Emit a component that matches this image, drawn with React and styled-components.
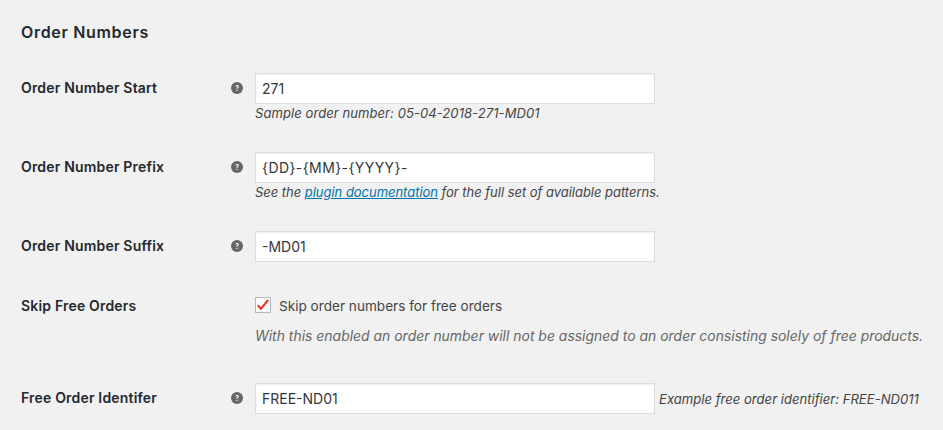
import React from 'react';
import styled, { createGlobalStyle } from 'styled-components';

const Global = createGlobalStyle`
  html, body { margin: 0; padding: 0; background: #f1f1f1; }
  body { font-family: Inter, "Open Sans", sans-serif; color: #23282d; overflow: hidden; }
`;

const Page = styled.div`
  width: 943px;
  height: 430px;
  box-sizing: border-box;
  padding: 23px 0 0 21px;
  display: flex;
  flex-direction: column;
  overflow: hidden;
`;

const Title = styled.h2`
  margin: 0 0 32px;
  font-size: 16px;
  line-height: 18px;
  font-weight: 600;
  letter-spacing: 0.68px;
  color: #23282d;
`;

const Row = styled.div`
  display: grid;
  grid-template-columns: 210px 24px 1fr;
  height: ${p => p.$height}px;
`;

const Label = styled.div`
  font-size: 14px;
  font-weight: 600;
  line-height: 18px;
  letter-spacing: 0.18px;
  padding-top: ${p => p.$flush ? 0 : 6}px;
`;

const HelpCell = styled.div`
  padding-top: 8.5px;
`;

const HelpIcon = styled.svg`
  display: block;
  width: 12px;
  height: 12px;
`;

const Field = styled.div`
  display: flex;
  flex-direction: column;
  align-items: flex-start;
`;

const InlineField = styled.div`
  display: flex;
  align-items: center;
  height: 31px;
  white-space: nowrap;
`;

const Input = styled.input`
  width: 400px;
  height: 31px;
  box-sizing: border-box;
  padding: 0 6px;
  border: 1px solid #ddd;
  background: #fff;
  border-radius: 0;
  outline: none;
  font-family: inherit;
  font-size: 14px;
  letter-spacing: ${p => p.$spaced ? 0.42 : 0}px;
  color: #32373c;
  box-shadow: inset 0 1px 2px rgba(0, 0, 0, 0.07);
`;

const Desc = styled.p`
  margin: 0;
  font-size: 13px;
  line-height: 18px;
  font-style: italic;
  letter-spacing: ${p => p.$tracking || 0}px;
  white-space: nowrap;
  color: #444;
`;

const NoteDesc = styled(Desc)`
  margin-top: 14px;
  font-size: 13.95px;
  color: #666;
`;

const SideDesc = styled(Desc)`
  margin-left: 4px;
  font-size: 13.1px;
`;

const DocLink = styled.a`
  color: #0073aa;
  text-decoration: underline;
`;

const CheckRow = styled.label`
  display: flex;
  align-items: flex-start;
  gap: 8px;
  height: 16px;
  font-size: 13.6px;
  line-height: 18px;
  color: #444;
`;

const CheckBox = styled.span`
  width: 16px;
  height: 16px;
  box-sizing: border-box;
  border: 1px solid #b4b9be;
  background: #fff;
  display: flex;
  align-items: center;
  justify-content: center;
`;

const Help = () => (
  <HelpIcon viewBox="0 0 20 20">
    <circle cx="10" cy="10" r="10" fill="#666" />
    <path d="M6.9 7.6c.2-1.9 1.5-2.8 3.3-2.8 1.8 0 3.1 1 3.1 2.6 0 1.2-.7 1.8-1.5 2.4-.7.5-.9.8-.9 1.6H9c0-1.4.4-2 1.3-2.6.6-.4 1-.8 1-1.3 0-.6-.5-1-1.2-1-.8 0-1.2.5-1.3 1.1H6.9zM9 12.8h2v2.3H9z" fill="#f1f1f1" />
  </HelpIcon>
);

const Check = () => (
  <svg width="14" height="14" viewBox="0 0 14 14">
    <path d="M1.8 7.2l3.2 3.6L12.2 2" fill="none" stroke="#ee3a33" strokeWidth="2.3" />
  </svg>
);

const App = () => (
  <Page>
    <Global />
    <Title>Order Numbers</Title>
    <Row $height={79}>
      <Label>Order Number Start</Label>
      <HelpCell><Help /></HelpCell>
      <Field>
        <Input readOnly value="271" />
        <Desc $tracking={0.08}>Sample order number: 05-04-2018-271-MD01</Desc>
      </Field>
    </Row>
    <Row $height={79}>
      <Label>Order Number Prefix</Label>
      <HelpCell><Help /></HelpCell>
      <Field>
        <Input readOnly $spaced value="{DD}-{MM}-{YYYY}-" />
        <Desc $tracking={-0.03}>See the <DocLink href="#">plugin documentation</DocLink> for the full set of available patterns.</Desc>
      </Field>
    </Row>
    <Row $height={66}>
      <Label>Order Number Suffix</Label>
      <HelpCell><Help /></HelpCell>
      <Field>
        <Input readOnly value="-MD01" />
      </Field>
    </Row>
    <Row $height={86}>
      <Label $flush>Skip Free Orders</Label>
      <HelpCell />
      <Field>
        <CheckRow>
          <CheckBox><Check /></CheckBox>
          Skip order numbers for free orders
        </CheckRow>
        <NoteDesc>With this enabled an order number will not be assigned to an order consisting solely of free products.</NoteDesc>
      </Field>
    </Row>
    <Row $height={40}>
      <Label>Free Order Identifer</Label>
      <HelpCell><Help /></HelpCell>
      <InlineField>
        <Input readOnly value="FREE-ND01" />
        <SideDesc>Example free order identifier: FREE-ND011</SideDesc>
      </InlineField>
    </Row>
  </Page>
);

export default App;
